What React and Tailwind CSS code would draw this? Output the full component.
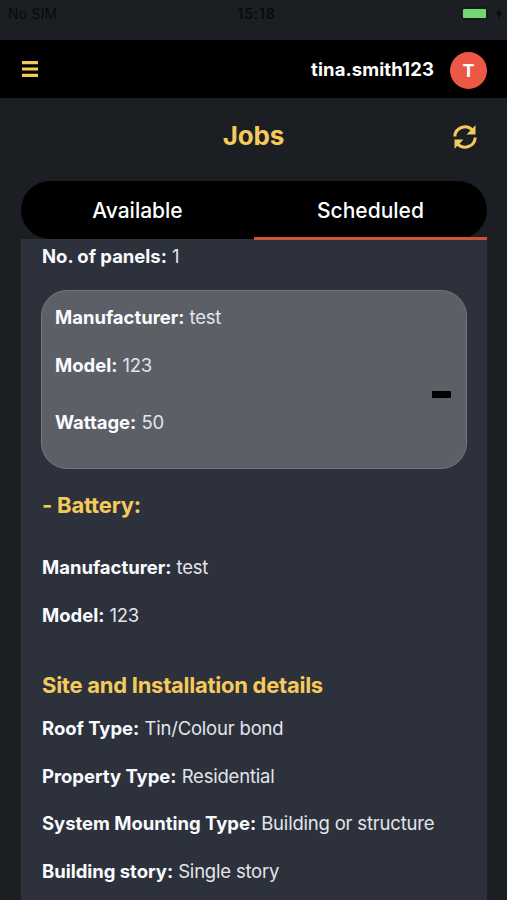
const SITE_DETAILS = [
  { label: 'Roof Type', value: 'Tin/Colour bond' },
  { label: 'Property Type', value: 'Residential' },
  { label: 'System Mounting Type', value: 'Building or structure' },
  { label: 'Building story', value: 'Single story' },
]

function Detail({ label, value }) {
  return (
    <p className="h-6 text-[18.5px] leading-6 tracking-[-0.2px] whitespace-nowrap text-[#e2e5ec]">
      <span className="mr-[0.8px] font-bold tracking-[-0.03px] text-[#fafbff]">{label}: </span>{value}
    </p>
  )
}

function StatusBar() {
  return (
    <div className="grid h-10 grid-cols-3 pt-0.5 text-sm text-[#080a0d]">
      <span className="pl-2 leading-6 tracking-[0.2px]">No SIM</span>
      <span className="pl-1.5 text-center leading-6 font-semibold tracking-[0.8px]">15:18</span>
      <div className="flex h-[23px] items-center justify-end pr-1">
        <div className="h-[13px] w-[27px] rounded-[3px] border border-[#14171b] p-px">
          <div className="h-full w-full rounded-[1px] bg-[#70d86f]" />
        </div>
        <svg className="ml-[7px]" width="8" height="11" viewBox="0 0 8 11" fill="currentColor">
          <path d="M5 0 1 6h2.5L3 11l4-6.300H4.500z" />
        </svg>
      </div>
    </div>
  )
}

function MenuIcon() {
  return (
    <svg width="16" height="16" viewBox="0 0 16 16" fill="#f5ca5a">
      <path d="M0 0h16v3.300H0zM0 6.400h16v3.200H0zM0 12.700h16V16H0z" />
    </svg>
  )
}

function SyncIcon() {
  return (
    <svg width="24" height="24" viewBox="0 0 24 24" fill="none">
      <path d="M1.800 11.500A10.200 9.900 0 0 1 19.600 5.200M22.200 12.500A10.200 9.900 0 0 1 4.400 18.800" stroke="#f5ca5a" strokeWidth="3" />
      <path d="M22.500 0.200v9.200H13.500zM1.500 23.800v-9.200H10.500z" fill="#f5ca5a" />
    </svg>
  )
}

export default function App() {
  return (
    <div className="flex h-[900px] w-[507px] flex-col overflow-hidden bg-[#1b1f24] font-['Inter',sans-serif]">
      <StatusBar />

      <header className="flex h-[58px] items-center justify-between bg-black pr-5 pl-[22px]">
        <MenuIcon />
        <div className="flex items-center gap-4">
          <span className="mt-px text-[18.5px] font-bold tracking-[0.1px] text-white">tina.smith123</span>
          <span className="mt-[3px] flex h-[37px] w-[37px] items-center justify-center rounded-full bg-[#ed5746] text-lg font-bold text-white">T</span>
        </div>
      </header>

      <div className="grid h-[83px] grid-cols-[1fr_auto_1fr] items-start pr-[30px] pl-[30px]">
        <span />
        <h1 className="pt-5 text-[26px] leading-9 font-bold tracking-[-0.15px] text-[#f5ca5a]">Jobs</h1>
        <button className="mt-[27px] justify-self-end">
          <SyncIcon />
        </button>
      </div>

      <main className="mx-5 flex min-h-0 flex-1 flex-col">
        <div className="relative ml-px grid h-[58px] shrink-0 grid-cols-2 rounded-full bg-black text-center text-[21px] leading-[59px] font-medium text-white">
          <span>Available</span>
          <span>Scheduled</span>
          <div className="absolute right-0 -bottom-px h-[3px] w-1/2 bg-[#cf5338]" />
        </div>

        <div className="ml-px min-h-0 flex-1 overflow-hidden bg-[#2d313b] px-[21px] pt-[5px]">
          <Detail label="No. of panels" value="1" />

          <div className="-mx-px mt-[22px] flex h-[179px] items-center justify-between rounded-[26px] border-[1.5px] border-[#72767d] bg-[#5d5f66] pr-[15px] pl-[13px]">
            <div className="h-full pt-[14px]">
              <Detail label="Manufacturer" value="test" />
              <div className="mt-6">
                <Detail label="Model" value="123" />
              </div>
              <div className="mt-[33px]">
                <Detail label="Wattage" value="50" />
              </div>
            </div>
            <span className="mt-[29px] h-[7px] w-[19px] rounded-[1px] bg-black" />
          </div>

          <h2 className="mt-5 text-[22px] leading-8 font-bold tracking-[-0.2px] text-[#f5ca5a]">- Battery:</h2>
          <div className="mt-[34px] flex flex-col gap-6">
            <Detail label="Manufacturer" value="test" />
            <Detail label="Model" value="123" />
          </div>

          <h2 className="mt-[42px] text-[22px] leading-8 font-bold tracking-[-0.26px] whitespace-nowrap text-[#f5ca5a]">Site and Installation details</h2>
          <div className="mt-[15px] flex flex-col gap-[23.6px]">
            {SITE_DETAILS.map(d => (
              <Detail key={d.label} label={d.label} value={d.value} />
            ))}
          </div>
        </div>
      </main>
    </div>
  )
}
